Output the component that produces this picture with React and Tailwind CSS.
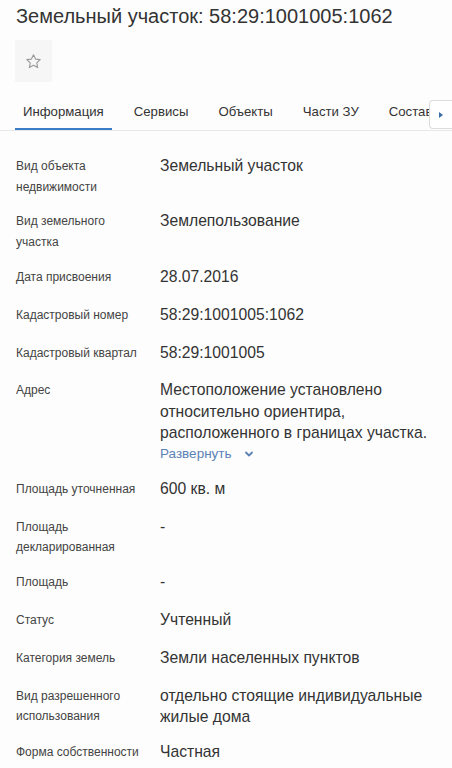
import React from "react";

const rows = [
  { label: ["Вид объекта", "недвижимости"], value: ["Земельный участок"] },
  { label: ["Вид земельного", "участка"], value: ["Землепользование"] },
  { label: ["Дата присвоения"], value: ["28.07.2016"] },
  { label: ["Кадастровый номер"], value: ["58:29:1001005:1062"] },
  { label: ["Кадастровый квартал"], value: ["58:29:1001005"] },
  {
    label: ["Адрес"],
    value: [
      "Местоположение установлено",
      "относительно ориентира,",
      "расположенного в границах участка.",
    ],
    expand: true,
  },
  { label: ["Площадь уточненная"], value: ["600 кв. м"] },
  { label: ["Площадь", "декларированная"], value: ["-"] },
  { label: ["Площадь"], value: ["-"] },
  { label: ["Статус"], value: ["Учтенный"] },
  { label: ["Категория земель"], value: ["Земли населенных пунктов"] },
  {
    label: ["Вид разрешенного", "использования"],
    value: ["отдельно стоящие индивидуальные", "жилые дома"],
  },
  { label: ["Форма собственности"], value: ["Частная"] },
];

const tabs = ["Информация", "Сервисы", "Объекты", "Части ЗУ", "Состав"];

export default function App() {
  return (
    <div className="w-[452px] h-[768px] overflow-hidden bg-[#fdfdfd] font-['Liberation_Sans',Arial,sans-serif]">
      <h1 className="px-4 pt-[4px] text-[20px] leading-6 text-[#333] whitespace-nowrap">
        Земельный участок: 58:29:1001005:1062
      </h1>

      <div className="ml-[15px] mt-3 w-[37px] h-[42px] bg-[#f6f6f6] flex items-center justify-center">
        <svg width="17" height="17" viewBox="0 0 24 24" fill="none" stroke="#9a9a9a" strokeWidth="1.6" strokeLinejoin="round">
          <path d="M12 2.5l2.9 6.1 6.6.8-4.9 4.6 1.3 6.6L12 17.3l-5.9 3.3 1.3-6.6-4.9-4.6 6.6-.8z" />
        </svg>
      </div>

      <div className="relative mt-[14px] border-b border-[#e8e8e8]">
        <div className="flex gap-[14px] pl-[15px] overflow-hidden whitespace-nowrap">
          {tabs.map((t, i) => (
            <div
              key={t}
              className={
                "px-2 pt-[6px] pb-[5.5px] text-[13.2px] leading-5 text-[#333] " +
                (i === 0 ? "border-b-2 border-[#3a7bc8]" : "border-b-2 border-transparent")
              }
            >
              {t}
            </div>
          ))}
        </div>
        <div className="absolute right-0 top-[4px] w-[23px] h-[29px] bg-white border border-r-0 border-[#dcdcdc] rounded-l-[4px] flex items-center justify-center">
          <svg width="6" height="8" viewBox="0 0 6 8">
            <path d="M1 1l4 3-4 3z" fill="#3b6ea5" />
          </svg>
        </div>
      </div>

      <div className="pt-[25.5px] px-4 flex flex-col gap-[14.4px]">
        {rows.map((r, i) => (
          <div key={i} className="flex min-h-[23.5px]">
            <div className="w-[144px] shrink-0 text-[12px] leading-[20.5px] text-[#444] whitespace-nowrap">
              {r.label.map((l, j) => (
                <div key={j}>{l}</div>
              ))}
            </div>
            <div className="text-[15.7px] leading-[21.3px] text-[#333] -mt-px whitespace-nowrap">
              {r.value.map((v, j) => (
                <div key={j}>{v}</div>
              ))}
              {r.expand && (
                <div className="flex items-center gap-[12px] text-[13.5px] text-[#5b82b5]">
                  <span>Развернуть</span>
                  <svg width="10" height="10" viewBox="0 0 10 10" fill="none" stroke="#5b82b5" strokeWidth="1.8" strokeLinecap="round" strokeLinejoin="round">
                    <path d="M2 3.5l3 3 3-3" />
                  </svg>
                </div>
              )}
            </div>
          </div>
        ))}
      </div>
    </div>
  );
}
